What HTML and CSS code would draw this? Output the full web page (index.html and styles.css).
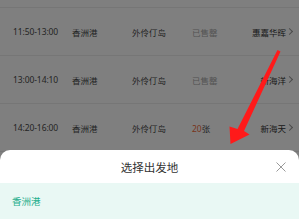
FILE: index.html
```html
<!DOCTYPE html>
<html lang="zh-CN">
<head>
<meta charset="utf-8">
<link rel="stylesheet" href="styles.css">
</head>
<body>
<div class="screen">
  <div class="list">
    <div class="row partial"></div>
    <div class="row">
      <span class="time">11:50-13:00</span>
      <span class="port">香洲港</span>
      <span class="dest">外伶仃岛</span>
      <span class="status sold">已售罄</span>
      <span class="boat">惠嘉华晖<i class="chev"></i></span>
    </div>
    <div class="row">
      <span class="time">13:00-14:10</span>
      <span class="port">香洲港</span>
      <span class="dest">外伶仃岛</span>
      <span class="status sold">已售罄</span>
      <span class="boat">新海洋<i class="chev"></i></span>
    </div>
    <div class="row">
      <span class="time">14:20-16:00</span>
      <span class="port">香洲港</span>
      <span class="dest">外伶仃岛</span>
      <span class="status"><b class="count">20</b>张</span>
      <span class="boat">新海天<i class="chev"></i></span>
    </div>
    <div class="row"></div>
  </div>

  <div class="mask"></div>

  <svg class="arrow" width="299" height="224" viewBox="0 0 299 224">
    <polygon points="277.5,50 280.5,51.5 244,131 249.5,134.5 230.5,144 229.5,126.5 237.5,129" fill="#ff1a1a"/>
  </svg>

  <div class="sheet">
    <div class="sheet-head">
      <span class="sheet-title">选择出发地</span>
      <span class="close">
        <svg width="10" height="10" viewBox="0 0 10 10"><path d="M0.5 0.5 L9.5 9.5 M9.5 0.5 L0.5 9.5" stroke="#999" stroke-width="1" fill="none"/></svg>
      </span>
    </div>
    <div class="option active">香洲港</div>
  </div>
</div>
</body>
</html>
```

FILE: styles.css
```css
* { box-sizing: border-box; margin: 0; padding: 0; }
html, body { width: 299px; height: 224px; overflow: hidden; background: #fff; }
body {
  font-family: "Noto Sans", "Noto Sans CJK SC", sans-serif;
  color: #333;
}
.screen { position: relative; width: 299px; height: 224px; overflow: hidden; }

.list { display: flex; flex-direction: column; }
.row {
  display: grid;
  grid-template-columns: 59px 60px 60px 60px 1fr;
  align-items: center;
  height: 48px;
  padding: 0 6px 0 13px;
  border-bottom: 1px solid #ececec;
  font-size: 8.5px;
  color: #4a4a4a;
  flex-shrink: 0;
}
.row.partial { height: 8px; }
.time { font-family: "Noto Sans", sans-serif; letter-spacing: -0.1px; }
.port, .dest { font-family: "Noto Sans CJK SC", sans-serif; }
.status { font-family: "Noto Sans CJK SC", sans-serif; }
.status.sold { color: #a8a8a8; }
.count { font-weight: normal; color: #f06a3a; font-family: "Noto Sans", sans-serif; }
.boat {
  display: flex; align-items: center; justify-content: flex-end;
  font-family: "Noto Sans CJK SC", sans-serif;
  color: #333;
}
.chev {
  display: inline-block; width: 5px; height: 5px;
  border-right: 1px solid #999; border-top: 1px solid #999;
  transform: rotate(45deg);
  margin-left: 1px; margin-right: 1px;
}

.mask { position: absolute; inset: 0; background: rgba(0,0,0,0.5); }
.arrow { position: absolute; left: 0; top: 0; }

.sheet {
  position: absolute; left: 0; right: 0; top: 150px; bottom: 0;
  background: #fff;
  border-radius: 10px 10px 0 0;
  display: flex; flex-direction: column;
}
.sheet-head {
  height: 33px;
  display: flex; align-items: center; justify-content: center;
  position: relative;
}
.sheet-title { font-size: 11.5px; color: #333; font-family: "Noto Sans CJK SC", sans-serif; }
.close {
  position: absolute; right: 13px; top: 12px;
  width: 10px; height: 10px; display: flex;
}
.option {
  height: 36px; display: flex; align-items: center;
  padding-left: 12px;
  font-size: 9.5px;
  font-family: "Noto Sans CJK SC", sans-serif;
}
.option.active { background: #e9f8f4; color: #1fae8c; }
```
